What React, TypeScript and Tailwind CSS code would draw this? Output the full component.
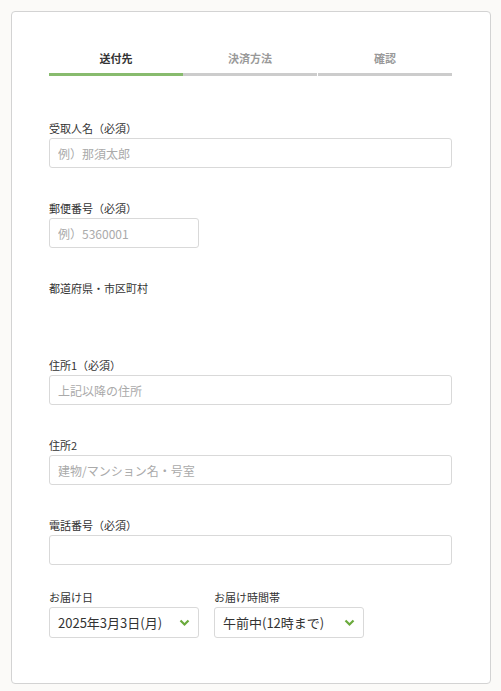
import React from 'react';

const steps = [
  { label: '送付先', active: true },
  { label: '決済方法', active: false },
  { label: '確認', active: false },
];

function Chevron() {
  return (
    <svg width="11" height="8" viewBox="0 0 11 8" className="shrink-0">
      <polyline points="1.5,1.5 5.5,5.5 9.5,1.5" fill="none" stroke="#6aaa3c" strokeWidth="2.2" />
    </svg>
  );
}

function Field({ label, placeholder, width }: { label: string; placeholder?: string; width?: string }) {
  return (
    <div className="flex flex-col">
      <label className="text-[11px] leading-4 text-[#333] mb-[2px]">{label}</label>
      <input
        placeholder={placeholder}
        className={`${width ?? 'w-full'} h-[30px] border border-[#d9d9d9] rounded-[3px] px-[8px] text-[12px] text-[#333] placeholder:text-[#aaa] outline-none bg-white`}
      />
    </div>
  );
}

function SelectBox({ label, value }: { label: string; value: string }) {
  return (
    <div className="flex flex-col w-[150px]">
      <label className="text-[11px] leading-4 text-[#333] mb-[2px]">{label}</label>
      <div className="h-[31px] border border-[#d9d9d9] rounded-[3px] pl-[8px] pr-[8px] flex items-center justify-between bg-white">
        <span className="text-[13px] text-[#333]">{value}</span>
        <Chevron />
      </div>
    </div>
  );
}

export default function App() {
  return (
    <div
      className="min-h-[691px] bg-[#fbfaf8] pt-[11px]"
      style={{ fontFamily: '"Noto Sans CJK JP", "Noto Sans", sans-serif' }}
    >
      <div className="ml-[11px] w-[480px] bg-white border border-[#d3d3d3] rounded-[4px] pl-[37px] pr-[38px] pt-[38px] pb-[45px]">
        <div className="flex">
          {steps.map((s, i) => (
            <div key={s.label} className={`flex flex-col ${i === 2 ? 'flex-1 ml-px' : 'w-[134px]'}`}>
              <span
                className={`text-center text-[11px] leading-4 font-bold pb-[7px] ${
                  s.active ? 'text-[#333]' : 'text-[#999]'
                }`}
              >
                {s.label}
              </span>
              <div className={`h-[3px] ${s.active ? 'bg-[#88bb6e]' : 'bg-[#cccccc]'}`} />
            </div>
          ))}
        </div>

        <div className="flex flex-col gap-[32px] mt-[44px]">
          <Field label="受取人名（必須）" placeholder="例）那須太郎" />
          <Field label="郵便番号（必須）" placeholder="例）5360001" width="w-[150px]" />
          <div className="flex flex-col">
            <label className="text-[11px] leading-4 text-[#333]">都道府県・市区町村</label>
            <div className="h-[29px]" />
          </div>
          <Field label="住所1（必須）" placeholder="上記以降の住所" />
          <Field label="住所2" placeholder="建物/マンション名・号室" />
          <Field label="電話番号（必須）" />
        </div>

        <div className="flex gap-[15px] mt-[24px]">
          <SelectBox label="お届け日" value="2025年3月3日(月)" />
          <SelectBox label="お届け時間帯" value="午前中(12時まで)" />
        </div>
      </div>
    </div>
  );
}
